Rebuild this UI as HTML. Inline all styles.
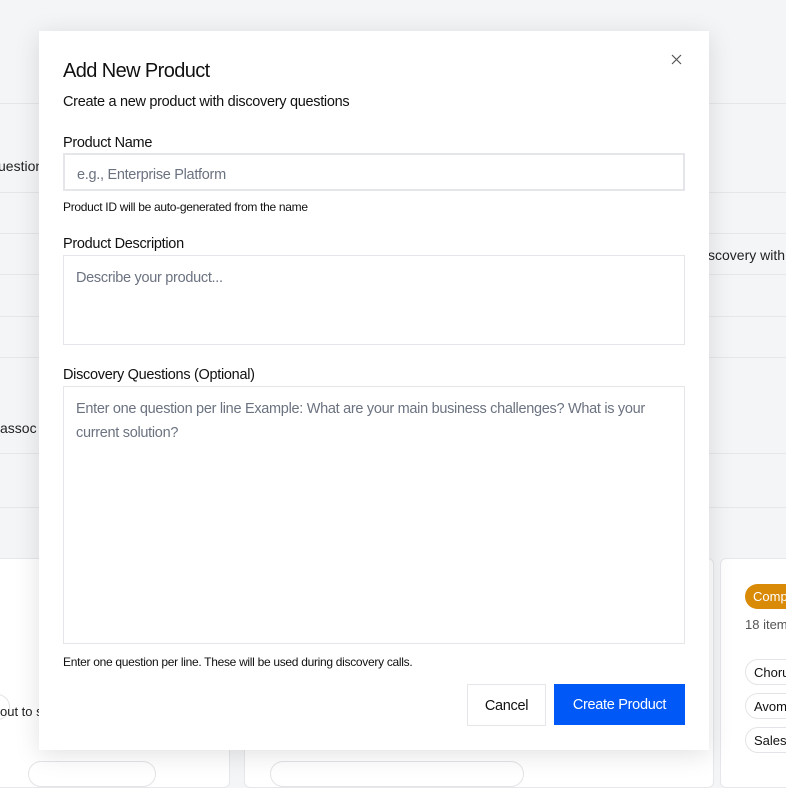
<!DOCTYPE html>
<html><head><style>
*{box-sizing:border-box;margin:0;padding:0}
body{width:786px;height:770px;overflow:hidden;background:#f4f5f7;font-family:"Liberation Sans",sans-serif;color:#111;position:relative}
.l{position:absolute;left:0;right:0;height:1px;background:#e6e7ea}
.bt{position:absolute;font-size:14px;color:#222;white-space:nowrap}
.card{position:absolute;background:#fff;border:1px solid #e6e7ea;border-radius:6px}
.modal{position:absolute;left:39px;top:31px;width:670px;height:719px;background:#fff;box-shadow:0 4px 24px rgba(0,0,0,.12)}
.abs{position:absolute;white-space:nowrap}
.lab{font-size:14.5px;letter-spacing:-.3px;color:#111}
.box{position:absolute;left:24px;width:622px;border:1px solid #e5e6e9;background:#fff;white-space:normal}
.ph{font-size:14.5px;color:#6b7280;letter-spacing:-.3px}
.help{font-size:12px;letter-spacing:-.3px;color:#111}
</style></head><body>
<div class="l" style="top:103px"></div><div class="l" style="top:192px"></div><div class="l" style="top:233px"></div>
<div class="l" style="top:274px"></div><div class="l" style="top:316px"></div><div class="l" style="top:357px"></div>
<div class="l" style="top:453px"></div><div class="l" style="top:507px"></div>
<div class="bt" style="left:-2px;top:158px">uestion</div>
<div class="bt" style="left:0;top:420px">assoc</div>
<div class="bt" style="left:708px;top:247px">scovery with</div>
<div class="card" style="left:-10px;top:558px;width:240px;height:230px"></div>
<div class="card" style="left:244px;top:558px;width:470px;height:230px"></div>
<div class="card" style="left:720px;top:558px;width:90px;height:230px"></div>
<div class="abs" style="left:745px;top:584px;width:60px;height:25px;border-radius:13px;background:#d98a07;color:#fff;font-size:13px;padding:5px 8px">Comp</div>
<div class="abs" style="left:745px;top:617px;font-size:13px;color:#555">18 item</div>
<div class="abs" style="left:745px;top:659px;width:60px;height:26px;border:1px solid #e3e4e7;border-radius:13px;font-size:13px;padding:5px 8px">Chorus</div>
<div class="abs" style="left:745px;top:693px;width:60px;height:26px;border:1px solid #e3e4e7;border-radius:13px;font-size:13px;padding:5px 8px">Avoma</div>
<div class="abs" style="left:745px;top:727px;width:60px;height:26px;border:1px solid #e3e4e7;border-radius:13px;font-size:13px;padding:5px 8px">Sales</div>
<div class="abs" style="left:-20px;top:694px;width:30px;height:26px;border:1px solid #e3e4e7;border-radius:13px"></div>
<div class="bt" style="left:0;top:704px;font-size:13px">out to s</div>
<div class="abs" style="left:28px;top:761px;width:128px;height:26px;border:1px solid #e3e4e7;border-radius:13px"></div>
<div class="abs" style="left:270px;top:761px;width:254px;height:26px;border:1px solid #e3e4e7;border-radius:13px"></div>
<div class="modal">
 <div class="abs" style="left:24px;top:29px;font-size:20px;letter-spacing:-.6px;color:#111">Add New Product</div>
 <svg class="abs" style="left:632px;top:23px" width="11" height="11" viewBox="0 0 11 11"><path d="M1 1L10 10M10 1L1 10" stroke="#555" stroke-width="1.2"/></svg>
 <div class="abs" style="left:24px;top:63px;font-size:14.5px;letter-spacing:-.3px">Create a new product with discovery questions</div>
 <div class="abs lab" style="left:24px;top:104px">Product Name</div>
 <div class="box" style="top:122px;height:38px;border:2px solid #e5e6e9;padding:11px 12px"><span class="ph">e.g., Enterprise Platform</span></div>
 <div class="abs help" style="left:24px;top:169px">Product ID will be auto-generated from the name</div>
 <div class="abs lab" style="left:24px;top:205px">Product Description</div>
 <div class="box" style="top:224px;height:90px;padding:13px 12px"><span class="ph">Describe your product...</span></div>
 <div class="abs lab" style="left:24px;top:336px">Discovery Questions (Optional)</div>
 <div class="box" style="top:355px;height:258px;padding:10px 12px;line-height:24px"><span class="ph">Enter one question per line Example: What are your main business challenges? What is your current solution?</span></div>
 <div class="abs help" style="left:24px;top:624px">Enter one question per line. These will be used during discovery calls.</div>
 <div class="abs" style="left:428px;top:653px;width:79px;height:42px;border:1px solid #e5e6e9;font-size:14.5px;text-align:center;line-height:42px;letter-spacing:-.3px">Cancel</div>
 <div class="abs" style="left:515px;top:653px;width:131px;height:41px;background:#0059f7;color:#fff;font-size:14.5px;text-align:center;line-height:42px;letter-spacing:-.3px">Create Product</div>
</div>
</body></html>
